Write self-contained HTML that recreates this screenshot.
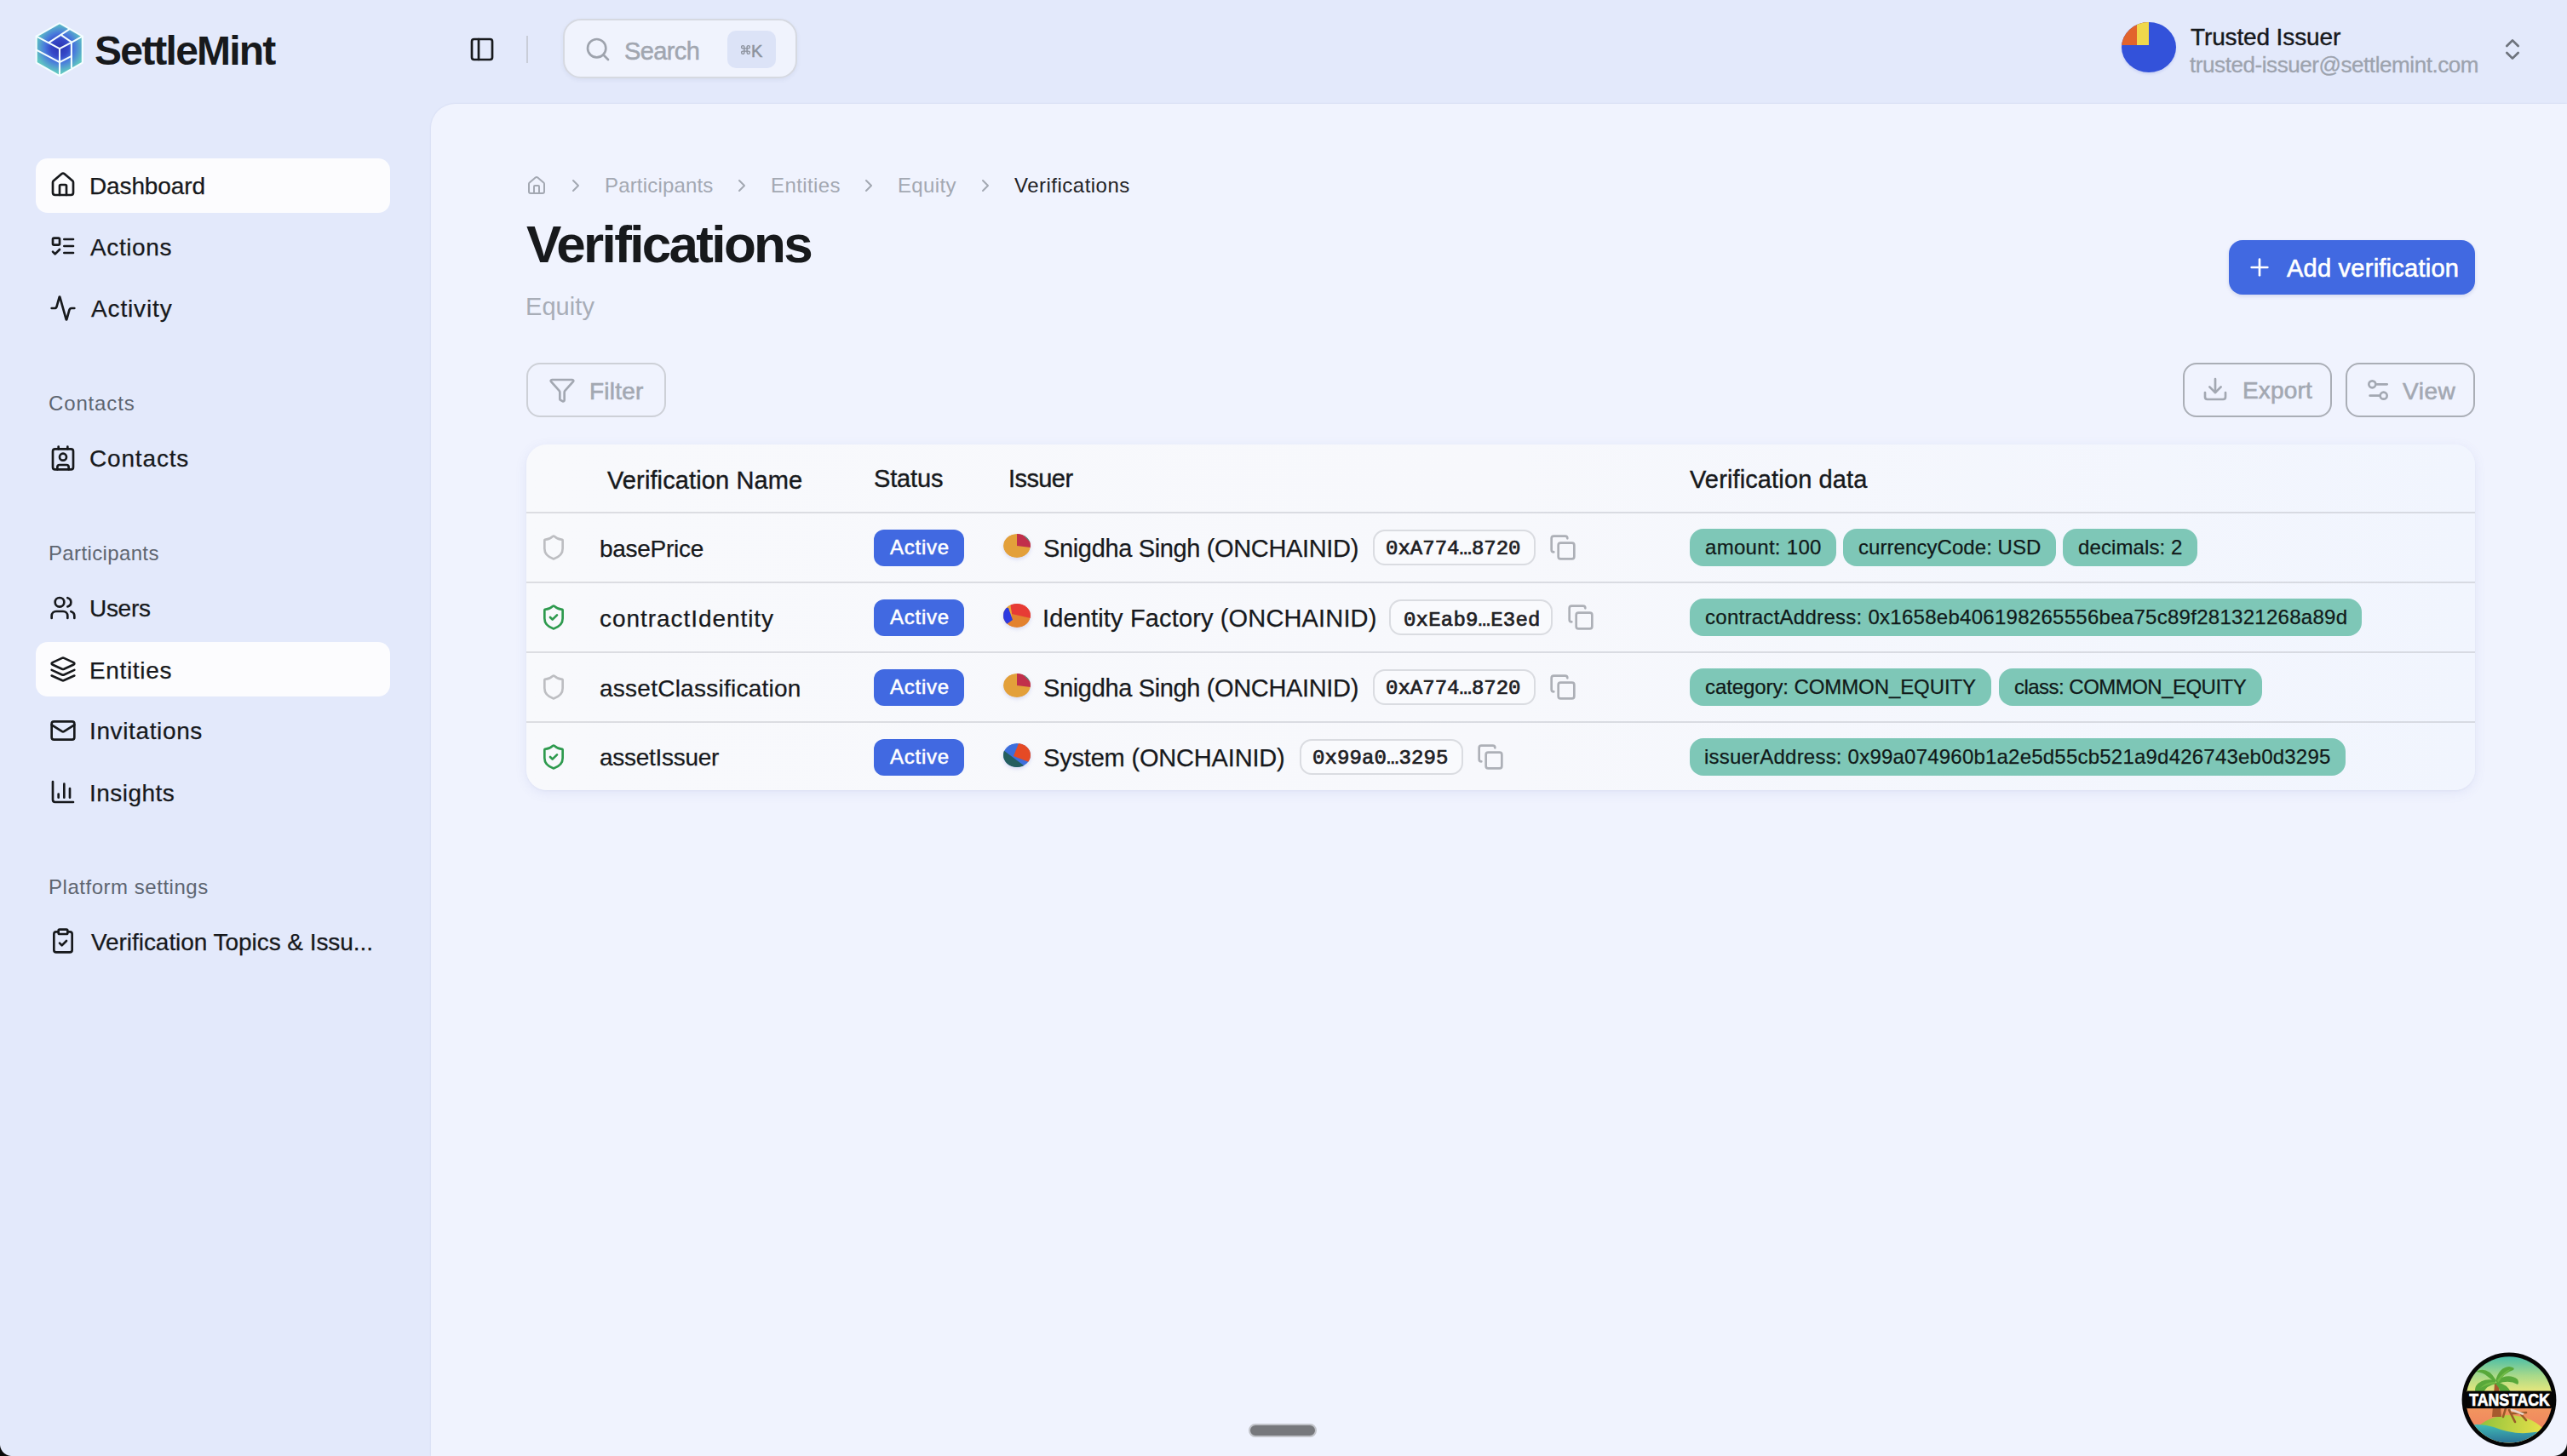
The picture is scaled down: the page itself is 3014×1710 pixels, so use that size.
<!DOCTYPE html>
<html><head><meta charset="utf-8">
<style>
html,body{margin:0;padding:0;}
body{width:3014px;height:1710px;overflow:hidden;position:relative;background:#E3E9FB;font-family:"Liberation Sans",sans-serif;color:#17191C;}
.t{position:absolute;white-space:nowrap;line-height:1;}
.ic{position:absolute;fill:none;stroke:currentColor;stroke-width:2;stroke-linecap:round;stroke-linejoin:round;}
#panel{position:absolute;left:506px;top:122px;right:0;bottom:0;background:#F0F3FE;border-top-left-radius:28px;box-shadow:0 0 2px rgba(90,100,160,0.18);}
.hl{position:absolute;left:42px;width:416px;height:64px;border-radius:14px;background:#FCFCFE;}
.obtn{position:absolute;border:2px solid #AAAEB6;border-radius:16px;}
.hr{position:absolute;left:618px;width:2288px;height:2px;background:linear-gradient(to right,#DCDDE2,#D7DAE2);}
.badge{position:absolute;width:106px;height:43px;border-radius:12px;background:#4169E1;}
.addr{position:absolute;height:38px;border:2px solid #DADCE1;border-radius:14px;background:#F9FAFD;}
.tag{position:absolute;height:44px;border-radius:16px;background:#7EC7B7;}
</style></head><body>

<!-- logo -->
<svg style="position:absolute;left:36px;top:20px" width="70" height="75" viewBox="0 0 1359 1456">
<defs>
<radialGradient id="lg1" cx="660" cy="700" r="560" gradientUnits="userSpaceOnUse"><stop offset="0" stop-color="#2A35B0"/><stop offset="0.35" stop-color="#3548C8"/><stop offset="0.6" stop-color="#4878DC"/><stop offset="1" stop-color="#5FC6C2"/></radialGradient>
<radialGradient id="rg1" cx="0.5" cy="0.45" r="0.35"><stop offset="0" stop-color="#2A3FB8" stop-opacity="0"/><stop offset="1" stop-color="#2A3FB8" stop-opacity="0"/></radialGradient>
</defs>
<polygon points="660,140 1180,440 1180,1040 660,1340 130,1040 130,440" fill="url(#lg1)"/>
<polygon points="660,140 1180,440 1180,1040 660,1340 130,1040 130,440" fill="url(#rg1)"/>
<g stroke="#F4FEFF" stroke-width="40" fill="none" stroke-linejoin="round" stroke-linecap="round">
<polygon points="660,140 1180,440 1180,1040 660,1340 130,1040 130,440"/>
<polyline points="130,440 660,720 930,580 1180,440"/>
<line x1="660" y1="720" x2="660" y2="1340"/>
<line x1="880" y1="280" x2="420" y2="580"/>
<line x1="710" y1="420" x2="930" y2="570"/>
<line x1="930" y1="580" x2="930" y2="1150"/>
<line x1="130" y1="750" x2="660" y2="1030"/>
<line x1="660" y1="1030" x2="930" y2="890"/>
</g>
</svg>

<svg class="ic" style="left:550px;top:42px;color:#17191C" width="32" height="32" viewBox="0 0 24 24"><rect width="18" height="18" x="3" y="3" rx="2"/><path d="M9 3v18"/></svg>
<div style="position:absolute;left:618px;top:42px;width:2px;height:32px;background:#C9CDD8"></div>

<div style="position:absolute;left:661px;top:22px;width:271px;height:66px;border:2px solid #D6D9E1;border-radius:21px;background:#F0F3FD;box-shadow:0 2px 5px rgba(60,70,120,0.07)"></div>
<svg class="ic" style="left:686px;top:42px;color:#9EA3AD" width="32" height="32" viewBox="0 0 24 24"><circle cx="11" cy="11" r="8"/><path d="m21 21-4.3-4.3"/></svg>
<div style="position:absolute;left:854px;top:36px;width:57px;height:44px;border-radius:10px;background:#DCE3F7"></div>
<svg class="ic" style="left:869px;top:52px;color:#8D939E;stroke-width:2.6" width="13" height="13" viewBox="0 0 24 24"><path d="M15 6v12a3 3 0 1 0 3-3H6a3 3 0 1 0 3 3V6a3 3 0 1 0-3 3h12a3 3 0 1 0-3-3"/></svg>
<div class="t" style="left:882px;top:50px;font-size:20px;color:#8D939E;-webkit-text-stroke:0.5px #8D939E">K</div>

<div style="position:absolute;left:2491px;top:26px;width:64px;height:59px;border-radius:50%;overflow:hidden;background:#3352DA;box-shadow:0 2px 3px rgba(100,120,220,0.2)">
<div style="position:absolute;left:0;top:0;width:32px;height:27px;background:#E2642C"></div>
<div style="position:absolute;left:18px;top:0;width:14px;height:27px;background:#F0D84B"></div>
</div>
<svg class="ic" style="left:2934px;top:42px;color:#6E737C" width="32" height="32" viewBox="0 0 24 24"><path d="m7 15 5 5 5-5"/><path d="m7 9 5-5 5 5"/></svg>

<div class="hl" style="top:186px"></div>
<div class="hl" style="top:754px"></div>
<svg class="ic" style="left:58px;top:201px" width="32" height="32" viewBox="0 0 24 24"><path d="M15 21v-8a1 1 0 0 0-1-1h-4a1 1 0 0 0-1 1v8"/><path d="M3 10a2 2 0 0 1 .709-1.528l7-5.999a2 2 0 0 1 2.582 0l7 5.999A2 2 0 0 1 21 10v9a2 2 0 0 1-2 2H5a2 2 0 0 1-2-2z"/></svg>
<svg class="ic" style="left:58px;top:273px" width="32" height="32" viewBox="0 0 24 24"><rect x="3" y="5" width="6" height="6" rx="1"/><path d="m3 17 2 2 4-4"/><path d="M13 6h8"/><path d="M13 12h8"/><path d="M13 18h8"/></svg>
<svg class="ic" style="left:58px;top:346px" width="32" height="32" viewBox="0 0 24 24"><path d="M22 12h-2.48a2 2 0 0 0-1.93 1.46l-2.35 8.36a.25.25 0 0 1-.48 0L9.24 2.18a.25.25 0 0 0-.48 0l-2.35 8.36A2 2 0 0 1 4.49 12H2"/></svg>
<svg class="ic" style="left:58px;top:522px" width="32" height="32" viewBox="0 0 24 24"><path d="M16 2v2"/><path d="M7 22v-2a2 2 0 0 1 2-2h6a2 2 0 0 1 2 2v2"/><path d="M8 2v2"/><circle cx="12" cy="11" r="3"/><rect x="3" y="4" width="18" height="18" rx="2"/></svg>
<svg class="ic" style="left:58px;top:698px" width="32" height="32" viewBox="0 0 24 24"><path d="M16 21v-2a4 4 0 0 0-4-4H6a4 4 0 0 0-4 4v2"/><circle cx="9" cy="7" r="4"/><path d="M22 21v-2a4 4 0 0 0-3-3.87"/><path d="M16 3.13a4 4 0 0 1 0 7.75"/></svg>
<svg class="ic" style="left:58px;top:770px" width="32" height="32" viewBox="0 0 24 24"><path d="m12.83 2.18a2 2 0 0 0-1.66 0L2.6 6.08a1 1 0 0 0 0 1.83l8.58 3.91a2 2 0 0 0 1.66 0l8.58-3.9a1 1 0 0 0 0-1.83Z"/><path d="m22 17.65-9.17 4.16a2 2 0 0 1-1.66 0L2 17.65"/><path d="m22 12.65-9.170 4.16a2 2 0 0 1-1.66 0L2 12.65"/></svg>
<svg class="ic" style="left:58px;top:842px" width="32" height="32" viewBox="0 0 24 24"><rect width="20" height="16" x="2" y="4" rx="2"/><path d="m22 7-8.97 5.7a1.94 1.94 0 0 1-2.06 0L2 7"/></svg>
<svg class="ic" style="left:58px;top:914px" width="32" height="32" viewBox="0 0 24 24"><path d="M3 3v16a2 2 0 0 0 2 2h16"/><path d="M18 17V9"/><path d="M13 17V5"/><path d="M8 17v-3"/></svg>
<svg class="ic" style="left:58px;top:1089px" width="32" height="32" viewBox="0 0 24 24"><rect width="8" height="4" x="8" y="2" rx="1" ry="1"/><path d="M16 4h2a2 2 0 0 1 2 2v14a2 2 0 0 1-2 2H6a2 2 0 0 1-2-2V6a2 2 0 0 1 2-2h2"/><path d="m9 14 2 2 4-4"/></svg>

<div id="panel"></div>

<svg class="ic" style="left:618px;top:206px;color:#A3A8B2" width="24" height="24" viewBox="0 0 24 24"><path d="M15 21v-8a1 1 0 0 0-1-1h-4a1 1 0 0 0-1 1v8"/><path d="M3 10a2 2 0 0 1 .709-1.528l7-5.999a2 2 0 0 1 2.582 0l7 5.999A2 2 0 0 1 21 10v9a2 2 0 0 1-2 2H5a2 2 0 0 1-2-2z"/></svg>
<svg class="ic" style="left:664px;top:206px;color:#A3A8B2" width="24" height="24" viewBox="0 0 24 24"><path d="m9 18 6-6-6-6"/></svg>
<svg class="ic" style="left:859px;top:206px;color:#A3A8B2" width="24" height="24" viewBox="0 0 24 24"><path d="m9 18 6-6-6-6"/></svg>
<svg class="ic" style="left:1008px;top:206px;color:#A3A8B2" width="24" height="24" viewBox="0 0 24 24"><path d="m9 18 6-6-6-6"/></svg>
<svg class="ic" style="left:1145px;top:206px;color:#A3A8B2" width="24" height="24" viewBox="0 0 24 24"><path d="m9 18 6-6-6-6"/></svg>

<div style="position:absolute;left:2617px;top:282px;width:289px;height:64px;border-radius:16px;background:#4169E1;box-shadow:0 2px 4px rgba(40,60,150,0.15)"></div>
<svg class="ic" style="left:2637px;top:298px;color:#fff" width="32" height="32" viewBox="0 0 24 24"><path d="M5 12h14"/><path d="M12 5v14"/></svg>

<div class="obtn" style="left:618px;top:426px;width:160px;height:60px;border-color:#CDD0D7"></div>
<svg class="ic" style="left:644px;top:442px;color:#A3A8B2" width="32" height="32" viewBox="0 0 24 24"><path d="M10 20a1 1 0 0 0 .553.895l2 1A1 1 0 0 0 14 21v-7a2 2 0 0 1 .517-1.341L21.74 4.67A1 1 0 0 0 21 3H3a1 1 0 0 0-.742 1.67l7.225 7.989A2 2 0 0 1 10 14z"/></svg>
<div class="obtn" style="left:2563px;top:426px;width:171px;height:60px"></div>
<svg class="ic" style="left:2585px;top:441px;color:#A3A8B2" width="32" height="32" viewBox="0 0 24 24"><path d="M21 15v4a2 2 0 0 1-2 2H5a2 2 0 0 1-2-2v-4"/><polyline points="7 10 12 15 17 10"/><line x1="12" x2="12" y1="15" y2="3"/></svg>
<div class="obtn" style="left:2754px;top:426px;width:148px;height:60px"></div>
<svg class="ic" style="left:2776px;top:442px;color:#A3A8B2" width="32" height="32" viewBox="0 0 24 24"><path d="M20 7h-9"/><path d="M14 17H5"/><circle cx="17" cy="17" r="3"/><circle cx="7" cy="7" r="3"/></svg>

<div id="card" style="position:absolute;left:618px;top:522px;width:2288px;height:406px;border-radius:24px;background:linear-gradient(to right,#F8F9FC 0%,#F7F8FC 50%,#F1F5FE 100%);box-shadow:0 3px 14px rgba(90,100,190,0.10),0 1px 2px rgba(60,70,120,0.05)"></div>
<div class="hr" style="top:601px"></div>
<div class="hr" style="top:683px"></div>
<div class="hr" style="top:765px"></div>
<div class="hr" style="top:847px"></div>
<svg class="ic" style="left:634px;top:627px;color:#BDBEC2" width="32" height="32" viewBox="0 0 24 24"><path d="M20 13c0 5-3.5 7.5-7.66 8.95a1 1 0 0 1-.67-.01C7.5 20.5 4 18 4 13V6a1 1 0 0 1 1-1c2 0 4.5-1.2 6.24-2.72a1.17 1.17 0 0 1 1.52 0C14.51 3.81 17 5 19 5a1 1 0 0 1 1 1z"/></svg>
<div class="badge" style="left:1026px;top:621.5px"></div>
<svg style="position:absolute;left:1178px;top:627px;filter:drop-shadow(0 2px 2px rgba(120,130,220,0.25))" width="32" height="28" viewBox="0 0 32 28"><clipPath id="c643"><ellipse cx="16" cy="14" rx="16" ry="14"/></clipPath><g clip-path="url(#c643)"><ellipse cx="16" cy="14" rx="16" ry="14" fill="#E3A03A"/><path d="M16 14 L16 0 L22 0 L32 10 L32 16 Z" fill="#C12F4B"/><path d="M22 0 L32 0 L32 10 Z" fill="#2E7F86"/></g></svg>
<div class="addr" style="left:1612px;top:622px;width:187px"></div>
<svg class="ic" style="left:1819px;top:627px;color:#ADB0B7" width="32" height="32" viewBox="0 0 24 24"><rect width="14" height="14" x="8" y="8" rx="2" ry="2"/><path d="M4 16c-1.1 0-2-.9-2-2V4c0-1.1.9-2 2-2h10c1.1 0 2 .9 2 2"/></svg>
<div class="tag" style="left:1984px;top:621px;width:172px"></div>
<div class="tag" style="left:2164px;top:621px;width:250px"></div>
<div class="tag" style="left:2422px;top:621px;width:158px"></div>
<svg class="ic" style="left:634px;top:709px;color:#2E9A4E" width="32" height="32" viewBox="0 0 24 24"><path d="M20 13c0 5-3.5 7.5-7.66 8.95a1 1 0 0 1-.67-.01C7.5 20.5 4 18 4 13V6a1 1 0 0 1 1-1c2 0 4.5-1.2 6.24-2.72a1.17 1.17 0 0 1 1.52 0C14.51 3.81 17 5 19 5a1 1 0 0 1 1 1z"/><path d="m9 12 2 2 4-4"/></svg>
<div class="badge" style="left:1026px;top:703.5px"></div>
<svg style="position:absolute;left:1178px;top:709px;filter:drop-shadow(0 2px 2px rgba(120,130,220,0.25))" width="32" height="28" viewBox="0 0 32 28"><clipPath id="c725"><ellipse cx="16" cy="14" rx="16" ry="14"/></clipPath><g clip-path="url(#c725)"><ellipse cx="16" cy="14" rx="16" ry="14" fill="#E3822F"/><path d="M8 0 L32 0 L32 17 L10 12 Z" fill="#E73B35"/><path d="M0 0 L8 0 L10 12 L10 18 L0 28 Z" fill="#E9A43A"/><path d="M0 4 L6 5 L11 19 L4 24 L0 28 Z" fill="#2E39E0"/></g></svg>
<div class="addr" style="left:1631px;top:704px;width:188px"></div>
<svg class="ic" style="left:1840px;top:709px;color:#ADB0B7" width="32" height="32" viewBox="0 0 24 24"><rect width="14" height="14" x="8" y="8" rx="2" ry="2"/><path d="M4 16c-1.1 0-2-.9-2-2V4c0-1.1.9-2 2-2h10c1.1 0 2 .9 2 2"/></svg>
<div class="tag" style="left:1984px;top:703px;width:789px"></div>
<svg class="ic" style="left:634px;top:791px;color:#BDBEC2" width="32" height="32" viewBox="0 0 24 24"><path d="M20 13c0 5-3.5 7.5-7.66 8.95a1 1 0 0 1-.67-.01C7.5 20.5 4 18 4 13V6a1 1 0 0 1 1-1c2 0 4.5-1.2 6.24-2.72a1.17 1.17 0 0 1 1.52 0C14.51 3.81 17 5 19 5a1 1 0 0 1 1 1z"/></svg>
<div class="badge" style="left:1026px;top:785.5px"></div>
<svg style="position:absolute;left:1178px;top:791px;filter:drop-shadow(0 2px 2px rgba(120,130,220,0.25))" width="32" height="28" viewBox="0 0 32 28"><clipPath id="c807"><ellipse cx="16" cy="14" rx="16" ry="14"/></clipPath><g clip-path="url(#c807)"><ellipse cx="16" cy="14" rx="16" ry="14" fill="#E3A03A"/><path d="M16 14 L16 0 L22 0 L32 10 L32 16 Z" fill="#C12F4B"/><path d="M22 0 L32 0 L32 10 Z" fill="#2E7F86"/></g></svg>
<div class="addr" style="left:1612px;top:786px;width:187px"></div>
<svg class="ic" style="left:1819px;top:791px;color:#ADB0B7" width="32" height="32" viewBox="0 0 24 24"><rect width="14" height="14" x="8" y="8" rx="2" ry="2"/><path d="M4 16c-1.1 0-2-.9-2-2V4c0-1.1.9-2 2-2h10c1.1 0 2 .9 2 2"/></svg>
<div class="tag" style="left:1984px;top:785px;width:354px"></div>
<div class="tag" style="left:2347px;top:785px;width:309px"></div>
<svg class="ic" style="left:634px;top:873px;color:#2E9A4E" width="32" height="32" viewBox="0 0 24 24"><path d="M20 13c0 5-3.5 7.5-7.66 8.95a1 1 0 0 1-.67-.01C7.5 20.5 4 18 4 13V6a1 1 0 0 1 1-1c2 0 4.5-1.2 6.24-2.72a1.17 1.17 0 0 1 1.52 0C14.51 3.81 17 5 19 5a1 1 0 0 1 1 1z"/><path d="m9 12 2 2 4-4"/></svg>
<div class="badge" style="left:1026px;top:867.5px"></div>
<svg style="position:absolute;left:1178px;top:873px;filter:drop-shadow(0 2px 2px rgba(120,130,220,0.25))" width="32" height="28" viewBox="0 0 32 28"><clipPath id="c889"><ellipse cx="16" cy="14" rx="16" ry="14"/></clipPath><g clip-path="url(#c889)"><ellipse cx="16" cy="14" rx="16" ry="14" fill="#3D6EDC"/><path d="M18 0 L32 0 L32 21 L30 22 L12 15 Z" fill="#E54A25"/><path d="M0 8 L24 26 L32 28 L0 28 Z" fill="#245E5E"/></g></svg>
<div class="addr" style="left:1526px;top:868px;width:188px"></div>
<svg class="ic" style="left:1734px;top:873px;color:#ADB0B7" width="32" height="32" viewBox="0 0 24 24"><rect width="14" height="14" x="8" y="8" rx="2" ry="2"/><path d="M4 16c-1.1 0-2-.9-2-2V4c0-1.1.9-2 2-2h10c1.1 0 2 .9 2 2"/></svg>
<div class="tag" style="left:1984px;top:867px;width:770px"></div>


<svg style="position:absolute;left:2880px;top:1580px" width="130" height="130" viewBox="0 0 130 130">
<defs>
<linearGradient id="tsky" x1="0" y1="13" x2="0" y2="54" gradientUnits="userSpaceOnUse"><stop offset="0" stop-color="#48BDA9"/><stop offset="0.55" stop-color="#A8D98A"/><stop offset="1" stop-color="#E6E77C"/></linearGradient>
<linearGradient id="tsun" x1="0" y1="74" x2="0" y2="112" gradientUnits="userSpaceOnUse"><stop offset="0" stop-color="#F2955F"/><stop offset="1" stop-color="#EE7B5E"/></linearGradient>
<linearGradient id="thill" x1="30" y1="84" x2="100" y2="100" gradientUnits="userSpaceOnUse"><stop offset="0" stop-color="#8CC13C"/><stop offset="1" stop-color="#E3DF48"/></linearGradient>
<linearGradient id="twater" x1="0" y1="94" x2="0" y2="114" gradientUnits="userSpaceOnUse"><stop offset="0" stop-color="#3FB8B4"/><stop offset="1" stop-color="#2C7597"/></linearGradient>
<clipPath id="tclip"><circle cx="66" cy="63.9" r="50.6"/></clipPath>
</defs>
<circle cx="66" cy="63.9" r="55.4" fill="#050505"/>
<g clip-path="url(#tclip)">
<rect x="0" y="0" width="130" height="55" fill="url(#tsky)"/>
<rect x="0" y="73" width="130" height="57" fill="url(#tsun)"/>
<path d="M22 104 Q36 84 64 82 Q94 82 112 104 L112 130 L22 130 Z" fill="url(#thill)"/>
<path d="M10 96 Q28 90 48 96 Q72 106 96 102 Q110 100 122 100 L122 130 L10 130 Z" fill="url(#twater)"/>
<path d="M49 44 L54 44 Q55 60 57 84 L46 84 Q48 60 49 44 Z" fill="#A65A2E"/>
<g fill="#58A83A">
<path d="M50 40 Q40 24 27 31 Q36 32 40 36 Q45 40 50 44 Z"/>
<path d="M50 42 Q54 26 66 25 Q74 26 71 29 Q60 32 53 45 Z"/>
<path d="M51 41 Q66 32 76 40 Q78 44 76 46 Q66 40 53 45 Z"/>
<path d="M49 41 Q34 38 27 48 Q25 53 27 55 L36 55 Q40 47 51 45 Z"/>
<path d="M52 43 Q64 46 68 55 L56 55 Q54 49 50 45 Z"/>
</g>
<g fill="#7CC24A" opacity="0.7"><path d="M52 41 Q60 30 68 28 Q60 34 53 44 Z"/><path d="M50 43 Q40 42 32 50 Q40 46 50 45 Z"/></g>
<g stroke="#9A5A2A" stroke-width="2.6" fill="none" stroke-linecap="round">
<path d="M62 74 L59 84"/><path d="M66 76 L73 90"/><path d="M70 80 L86 79"/><path d="M80 81 L86 88"/>
</g>
<path d="M68 74 L84 80 L82 82 L68 77 Z" fill="#E9D4C8"/>
</g>
<rect x="10" y="53.6" width="112" height="20.5" fill="#050505" clip-path="url(#tclip)"/>
<text x="19.2" y="71" font-family="Liberation Sans" font-weight="bold" font-size="20.5" fill="#fff" stroke="#fff" stroke-width="0.7" textLength="94.6" lengthAdjust="spacingAndGlyphs">TANSTACK</text>
</svg>
<div style="position:absolute;left:0;top:1696px;width:14px;height:14px;background:radial-gradient(circle at 14px 0, transparent 13.5px, #0a0a0a 14.5px)"></div>
<div style="position:absolute;left:2998px;top:1694px;width:16px;height:16px;background:radial-gradient(circle at 0 0, transparent 15.5px, #0a0a0a 16.5px)"></div>
<div style="position:absolute;left:1466px;top:1672px;width:76px;height:12px;border-radius:8px;background:#77787C;border:2px solid #C2C4CA"></div>

<div class="t" id="logo" style="left:111.00px;top:36.32px;font-size:48.0px;letter-spacing:-1.778px;font-weight:bold;color:#17191C;">SettleMint</div>
<div class="t" id="search" style="left:733.00px;top:46.36px;font-size:29.0px;letter-spacing:-0.600px;color:#A1A6B0;-webkit-text-stroke:0.5px #A1A6B0;">Search</div>
<div class="t" id="uname" style="left:2572.00px;top:29.52px;font-size:28.0px;letter-spacing:-0.130px;color:#17191C;-webkit-text-stroke:0.25px #17191C;-webkit-text-stroke:0.4px #17191C;">Trusted Issuer</div>
<div class="t" id="email" style="left:2571.00px;top:62.84px;font-size:26.0px;letter-spacing:-0.428px;color:#9DA3AE;-webkit-text-stroke:0.3px #9DA3AE;">trusted-issuer@settlemint.com</div>
<div class="t" id="n_dash" style="left:105.00px;top:204.52px;font-size:28.0px;letter-spacing:-0.125px;color:#17191C;-webkit-text-stroke:0.25px #17191C;">Dashboard</div>
<div class="t" id="n_act" style="left:106.00px;top:276.52px;font-size:28.0px;letter-spacing:0.602px;color:#17191C;-webkit-text-stroke:0.25px #17191C;">Actions</div>
<div class="t" id="n_activ" style="left:107.00px;top:348.52px;font-size:28.0px;letter-spacing:0.857px;color:#17191C;-webkit-text-stroke:0.25px #17191C;">Activity</div>
<div class="t" id="s_cont" style="left:57.00px;top:462.16px;font-size:24.0px;letter-spacing:0.857px;color:#5E6570;">Contacts</div>
<div class="t" id="n_cont" style="left:105.00px;top:524.52px;font-size:28.0px;letter-spacing:0.832px;color:#17191C;-webkit-text-stroke:0.25px #17191C;">Contacts</div>
<div class="t" id="s_part" style="left:57.00px;top:638.16px;font-size:24.0px;letter-spacing:0.364px;color:#5E6570;">Participants</div>
<div class="t" id="n_users" style="left:105.00px;top:700.52px;font-size:28.0px;letter-spacing:-0.300px;color:#17191C;-webkit-text-stroke:0.25px #17191C;">Users</div>
<div class="t" id="n_ent" style="left:105.00px;top:773.52px;font-size:28.0px;letter-spacing:0.655px;color:#17191C;-webkit-text-stroke:0.25px #17191C;">Entities</div>
<div class="t" id="n_inv" style="left:105.00px;top:844.52px;font-size:28.0px;letter-spacing:0.630px;color:#17191C;-webkit-text-stroke:0.25px #17191C;">Invitations</div>
<div class="t" id="n_ins" style="left:105.00px;top:917.52px;font-size:28.0px;letter-spacing:0.454px;color:#17191C;-webkit-text-stroke:0.25px #17191C;">Insights</div>
<div class="t" id="s_plat" style="left:57.00px;top:1030.16px;font-size:24.0px;letter-spacing:0.531px;color:#5E6570;">Platform settings</div>
<div class="t" id="n_ver" style="left:107.00px;top:1092.52px;font-size:28.0px;letter-spacing:-0.054px;color:#17191C;-webkit-text-stroke:0.25px #17191C;">Verification Topics &amp; Issu...</div>
<div class="t" id="bc1" style="left:710.00px;top:206.16px;font-size:24.0px;letter-spacing:0.172px;color:#A3A8B2;">Participants</div>
<div class="t" id="bc2" style="left:905.00px;top:206.16px;font-size:24.0px;letter-spacing:0.386px;color:#A3A8B2;">Entities</div>
<div class="t" id="bc3" style="left:1054.00px;top:206.16px;font-size:24.0px;letter-spacing:0.340px;color:#A3A8B2;">Equity</div>
<div class="t" id="bc4" style="left:1191.00px;top:206.16px;font-size:24.0px;letter-spacing:0.491px;color:#1F2226;">Verifications</div>
<div class="t" id="title" style="left:618.00px;top:256.08px;font-size:62.0px;letter-spacing:-2.657px;font-weight:bold;color:#17191C;">Verifications</div>
<div class="t" id="sub" style="left:617.00px;top:346.36px;font-size:29.0px;letter-spacing:0.060px;color:#A8ADB7;">Equity</div>
<div class="t" id="addbtn" style="left:2685.00px;top:301.36px;font-size:29.0px;letter-spacing:0.242px;color:#fff;-webkit-text-stroke:0.6px #fff;">Add verification</div>
<div class="t" id="filter" style="left:692.00px;top:445.52px;font-size:28.0px;letter-spacing:0.220px;color:#A3A8B2;-webkit-text-stroke:0.6px #A3A8B2;">Filter</div>
<div class="t" id="export" style="left:2633.00px;top:444.52px;font-size:28.0px;letter-spacing:0.180px;color:#A3A8B2;-webkit-text-stroke:0.6px #A3A8B2;">Export</div>
<div class="t" id="view" style="left:2821.00px;top:445.52px;font-size:28.0px;letter-spacing:0.532px;color:#A3A8B2;-webkit-text-stroke:0.6px #A3A8B2;">View</div>
<div class="t" id="th1" style="left:713.00px;top:550.36px;font-size:29.0px;letter-spacing:0.118px;color:#17191C;-webkit-text-stroke:0.4px #17191C;">Verification Name</div>
<div class="t" id="th2" style="left:1026.00px;top:548.36px;font-size:29.0px;letter-spacing:-0.140px;color:#17191C;-webkit-text-stroke:0.4px #17191C;">Status</div>
<div class="t" id="th3" style="left:1184.00px;top:548.36px;font-size:29.0px;letter-spacing:-0.580px;color:#17191C;-webkit-text-stroke:0.4px #17191C;">Issuer</div>
<div class="t" id="th4" style="left:1984.00px;top:549.36px;font-size:29.0px;letter-spacing:0.128px;color:#17191C;-webkit-text-stroke:0.4px #17191C;">Verification data</div>
<div class="t" id="r0_name" style="left:704.00px;top:630.52px;font-size:28.0px;letter-spacing:-0.275px;color:#17191C;-webkit-text-stroke:0.25px #17191C;">basePrice</div>
<div class="t" id="r0_act" style="left:1045.00px;top:631.16px;font-size:24.0px;letter-spacing:0.760px;color:#fff;-webkit-text-stroke:0.5px #fff;">Active</div>
<div class="t" id="r0_iss" style="left:1225.00px;top:630.36px;font-size:29.0px;letter-spacing:-0.353px;color:#17191C;-webkit-text-stroke:0.25px #17191C;">Snigdha Singh (ONCHAINID)</div>
<div class="t" id="r0_addr" style="left:1627.00px;top:632.60px;font-size:24.0px;letter-spacing:0.010px;font-family:'Liberation Mono',monospace;color:#1E2024;-webkit-text-stroke:0.7px #1E2024;">0xA774…8720</div>
<div class="t" id="r0_tag0" style="left:2002.00px;top:631.16px;font-size:24.0px;letter-spacing:0.300px;color:#111A1A;-webkit-text-stroke:0.25px #111A1A;">amount: 100</div>
<div class="t" id="r0_tag1" style="left:2182.00px;top:631.16px;font-size:24.0px;letter-spacing:0.062px;color:#111A1A;-webkit-text-stroke:0.25px #111A1A;">currencyCode: USD</div>
<div class="t" id="r0_tag2" style="left:2440.00px;top:631.16px;font-size:24.0px;letter-spacing:0.100px;color:#111A1A;-webkit-text-stroke:0.25px #111A1A;">decimals: 2</div>
<div class="t" id="r1_name" style="left:704.00px;top:712.52px;font-size:28.0px;letter-spacing:0.948px;color:#17191C;-webkit-text-stroke:0.25px #17191C;">contractIdentity</div>
<div class="t" id="r1_act" style="left:1045.00px;top:713.16px;font-size:24.0px;letter-spacing:0.760px;color:#fff;-webkit-text-stroke:0.5px #fff;">Active</div>
<div class="t" id="r1_iss" style="left:1224.00px;top:712.36px;font-size:29.0px;letter-spacing:0.148px;color:#17191C;-webkit-text-stroke:0.25px #17191C;">Identity Factory (ONCHAINID)</div>
<div class="t" id="r1_addr" style="left:1648.00px;top:716.60px;font-size:24.0px;letter-spacing:0.200px;font-family:'Liberation Mono',monospace;color:#1E2024;-webkit-text-stroke:0.7px #1E2024;">0xEab9…E3ed</div>
<div class="t" id="r1_tag0" style="left:2002.00px;top:713.16px;font-size:24.0px;letter-spacing:0.276px;color:#111A1A;-webkit-text-stroke:0.25px #111A1A;">contractAddress: 0x1658eb406198265556bea75c89f281321268a89d</div>
<div class="t" id="r2_name" style="left:704.00px;top:794.52px;font-size:28.0px;letter-spacing:0.250px;color:#17191C;-webkit-text-stroke:0.25px #17191C;">assetClassification</div>
<div class="t" id="r2_act" style="left:1045.00px;top:795.16px;font-size:24.0px;letter-spacing:0.760px;color:#fff;-webkit-text-stroke:0.5px #fff;">Active</div>
<div class="t" id="r2_iss" style="left:1225.00px;top:794.36px;font-size:29.0px;letter-spacing:-0.353px;color:#17191C;-webkit-text-stroke:0.25px #17191C;">Snigdha Singh (ONCHAINID)</div>
<div class="t" id="r2_addr" style="left:1627.00px;top:796.60px;font-size:24.0px;letter-spacing:0.010px;font-family:'Liberation Mono',monospace;color:#1E2024;-webkit-text-stroke:0.7px #1E2024;">0xA774…8720</div>
<div class="t" id="r2_tag0" style="left:2002.00px;top:795.16px;font-size:24.0px;letter-spacing:-0.090px;color:#111A1A;-webkit-text-stroke:0.25px #111A1A;">category: COMMON_EQUITY</div>
<div class="t" id="r2_tag1" style="left:2365.00px;top:795.16px;font-size:24.0px;letter-spacing:-0.527px;color:#111A1A;-webkit-text-stroke:0.25px #111A1A;">class: COMMON_EQUITY</div>
<div class="t" id="r3_name" style="left:704.00px;top:875.52px;font-size:28.0px;letter-spacing:-0.280px;color:#17191C;-webkit-text-stroke:0.25px #17191C;">assetIssuer</div>
<div class="t" id="r3_act" style="left:1045.00px;top:877.16px;font-size:24.0px;letter-spacing:0.760px;color:#fff;-webkit-text-stroke:0.5px #fff;">Active</div>
<div class="t" id="r3_iss" style="left:1225.00px;top:876.36px;font-size:29.0px;letter-spacing:-0.182px;color:#17191C;-webkit-text-stroke:0.25px #17191C;">System (ONCHAINID)</div>
<div class="t" id="r3_addr" style="left:1541.00px;top:878.60px;font-size:24.0px;letter-spacing:0.100px;font-family:'Liberation Mono',monospace;color:#1E2024;-webkit-text-stroke:0.7px #1E2024;">0x99a0…3295</div>
<div class="t" id="r3_tag0" style="left:2001.00px;top:877.16px;font-size:24.0px;letter-spacing:0.214px;color:#111A1A;-webkit-text-stroke:0.25px #111A1A;">issuerAddress: 0x99a074960b1a2e5d55cb521a9d426743eb0d3295</div>
</body></html>
